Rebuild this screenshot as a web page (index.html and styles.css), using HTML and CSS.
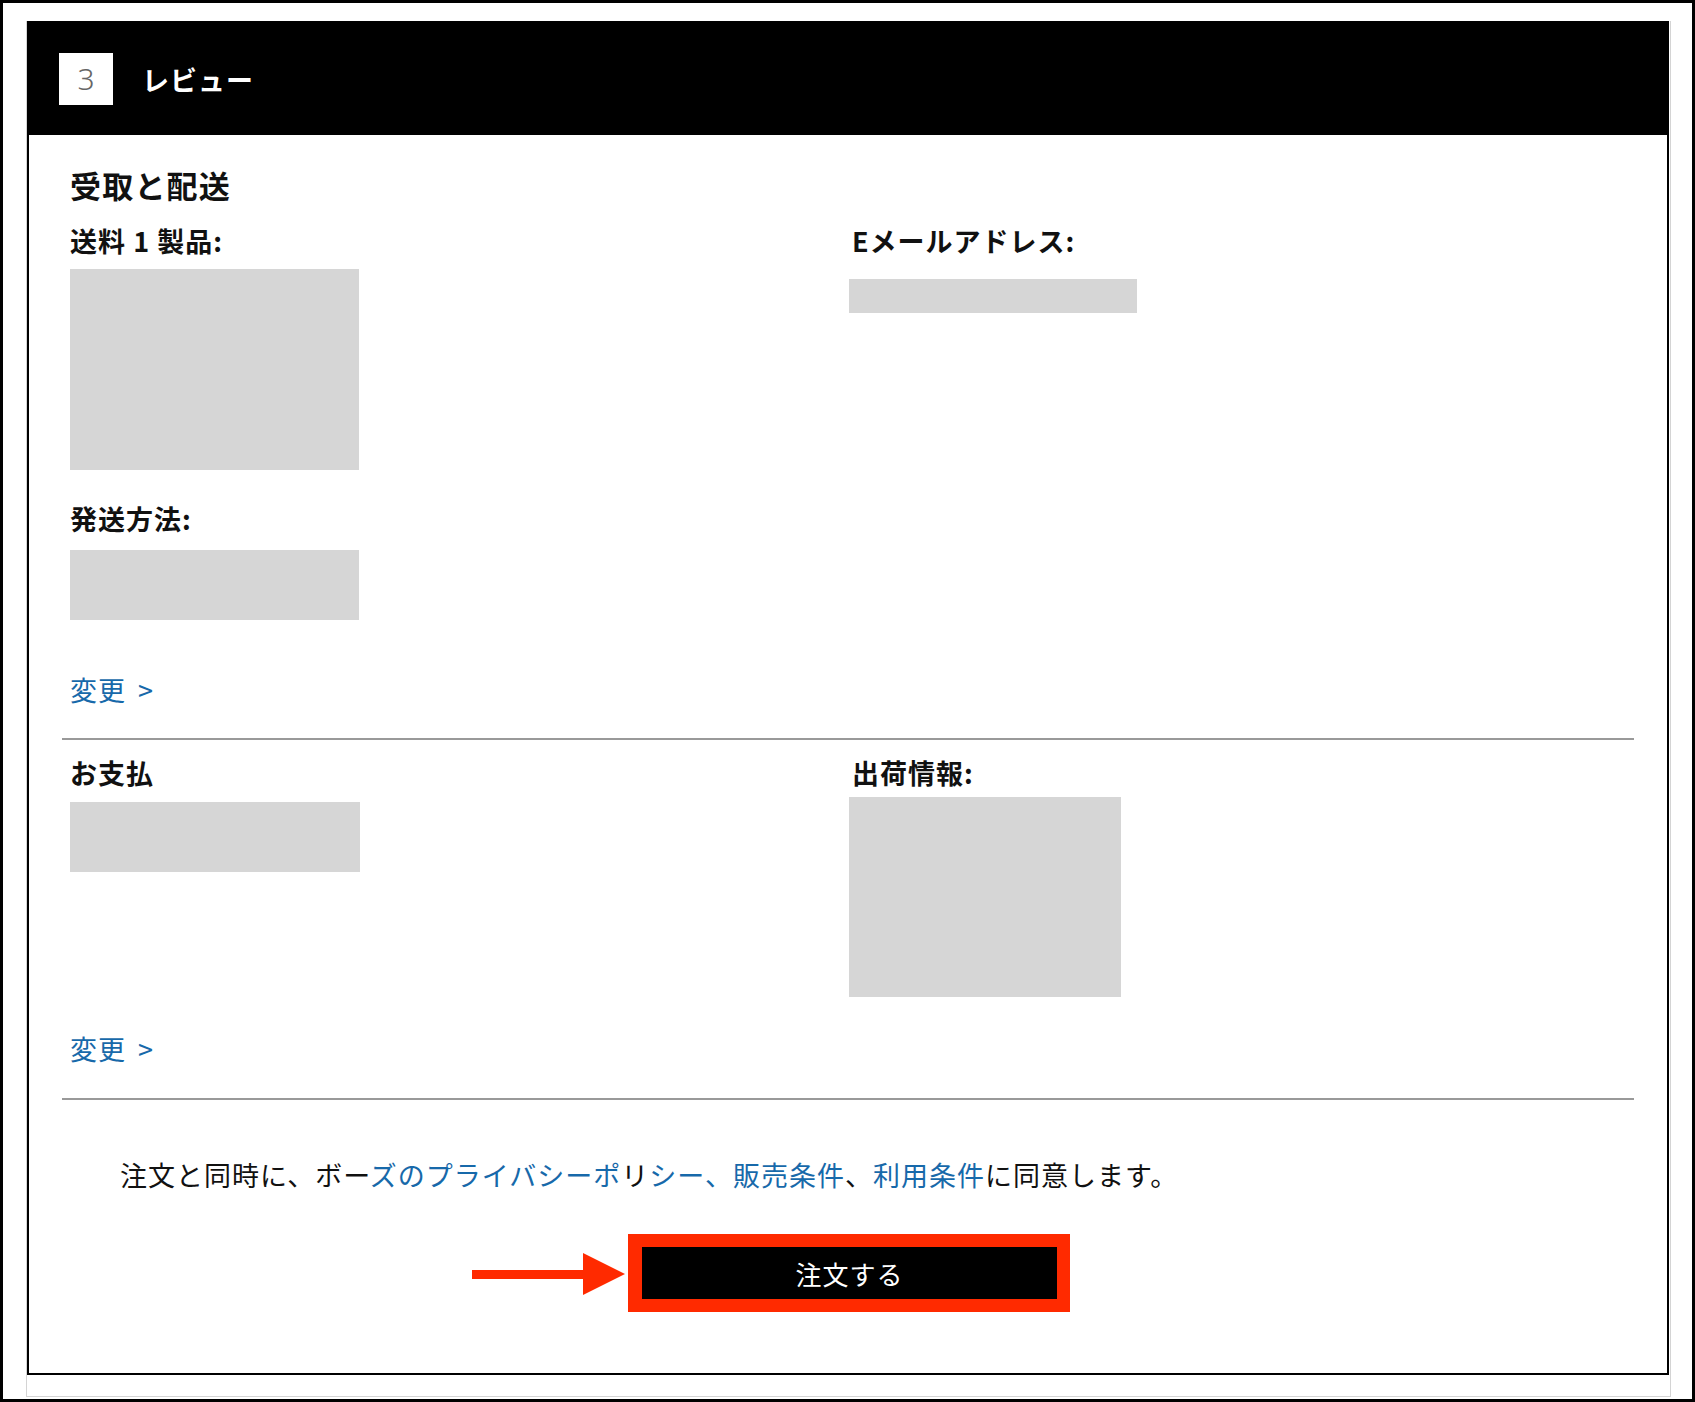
FILE: index.html
```html
<!DOCTYPE html>
<html lang="ja">
<head>
<meta charset="utf-8">
<title>レビュー</title>
<link rel="stylesheet" href="styles.css">
</head>
<body>
<div class="frame">
  <div class="shell">
    <div class="card">
      <div class="card-header">
        <div class="step-num">3</div>
        <div class="step-title">レビュー</div>
      </div>
      <div class="card-body">
        <div class="section">
          <h2 class="section-title">受取と配送</h2>
          <div class="grid">
            <div class="col">
              <div class="label">送料 1 製品:</div>
              <div class="ph ph-product"></div>
              <div class="label label-gap">発送方法:</div>
              <div class="ph ph-method"></div>
            </div>
            <div class="col">
              <div class="label label-email">Eメールアドレス:</div>
              <div class="ph ph-email"></div>
            </div>
          </div>
          <a class="change first-change" href="#">変更 &gt;</a>
        </div>
        <hr class="divider">
        <div class="section section-pay">
          <div class="grid">
            <div class="col">
              <div class="label">お支払</div>
              <div class="ph ph-pay"></div>
            </div>
            <div class="col">
              <div class="label label-email">出荷情報:</div>
              <div class="ph ph-ship"></div>
            </div>
          </div>
          <a class="change second-change" href="#">変更 &gt;</a>
        </div>
        <hr class="divider">
        <p class="agree">注文と同時に、ボー<a href="#">ズのプライバシーポ</a>リ<a href="#">シー、販売条件</a>、<a href="#">利用条件</a>に同意します。</p>
        <div class="order-row">
          <div class="order-highlight">
            <svg class="arrow" width="153" height="42" viewBox="0 0 153 42" aria-hidden="true">
              <rect x="0" y="17" width="114" height="9" fill="#ff2a00"/>
              <polygon points="111,0 153,21 111,42" fill="#ff2a00"/>
            </svg>
            <button class="order-btn" type="button">注文する</button>
          </div>
        </div>
      </div>
    </div>
  </div>
</div>
</body>
</html>
```
FILE: styles.css
```css
* { box-sizing: border-box; }
html, body { margin: 0; padding: 0; background: #fff; }
body {
  font-family: "Noto Sans CJK JP", "Noto Sans", sans-serif;
  color: #111;
}
.frame {
  width: 1695px;
  height: 1402px;
  border: 3px solid #000;
  padding: 18px 22px 0 23px;
  overflow: hidden;
}
.shell {
  width: 1645px;
  border: 1px solid #d4d4d4;
  border-top: none;
  padding: 0 1px 21px 0;
}
.card {
  border: 2px solid #000;
  background: #fff;
}
.card-header {
  background: #000;
  height: 112px;
  display: flex;
  align-items: center;
  padding-left: 30px;
}
.step-num {
  width: 54px;
  height: 52px;
  background: #fff;
  color: #666;
  font-family: "Noto Sans", sans-serif;
  font-weight: 300;
  font-size: 30px;
  line-height: 52px;
  display: flex;
  align-items: center;
  justify-content: center;
}
.step-title {
  margin-left: 29px;
  color: #fff;
  font-size: 27px;
  font-weight: 700;
  letter-spacing: 1px;
}
.card-body {
  padding: 0 33px 61px 33px;
}
.section {
  padding: 30px 8px 0 8px;
}
.section-pay {
  padding-top: 17px;
}
.section-title {
  margin: 0;
  font-size: 31px;
  line-height: 40px;
  font-weight: 700;
  letter-spacing: 1.2px;
  color: #111;
}
.grid {
  display: grid;
  grid-template-columns: 779px 1fr;
}
.section-title + .grid { margin-top: 20px; }
.label {
  font-size: 27px;
  line-height: 32px;
  font-weight: 700;
  letter-spacing: 1px;
  color: #111;
}
.label-email { padding-left: 3px; }
.label-gap { margin-top: 33px; }
.ph { background: #d6d6d6; }
.ph-product { width: 289px; height: 201px; margin-top: 12px; }
.ph-method { width: 289px; height: 70px; margin-top: 15px; }
.ph-email { width: 288px; height: 34px; margin-top: 22px; }
.ph-pay { width: 290px; height: 70px; margin-top: 13px; }
.ph-ship { width: 272px; height: 200px; margin-top: 8px; }
.change {
  display: block;
  width: max-content;
  font-size: 27px;
  line-height: 34px;
  letter-spacing: 1px;
  word-spacing: 5px;
  color: #1769aa;
  text-decoration: none;
}
.first-change { margin-top: 53px; }
.second-change { margin-top: 35px; }
.divider {
  border: none;
  height: 2px;
  background: #999;
  margin: 31px 0 0 0;
}
.section-pay + .divider { margin-top: 32px; }
.agree {
  margin: 58px 0 0 0;
  padding-left: 58px;
  font-size: 27px;
  line-height: 34px;
  letter-spacing: 1px;
  color: #111;
}
.agree a {
  color: #1769aa;
  text-decoration: none;
}
.order-row {
  margin-top: 42px;
  display: flex;
  justify-content: center;
  padding-left: 2px;
}
.order-highlight {
  position: relative;
  border: 13px solid #ff2a00;
  border-left-width: 14px;
}
.order-btn {
  display: block;
  width: 415px;
  height: 52px;
  background: #000;
  color: #fff;
  border: none;
  font-family: "Noto Sans CJK JP", "Noto Sans", sans-serif;
  font-size: 26px;
  letter-spacing: 1px;
  padding: 0;
}
.arrow {
  position: absolute;
  left: -170px;
  top: 6px;
}
```
